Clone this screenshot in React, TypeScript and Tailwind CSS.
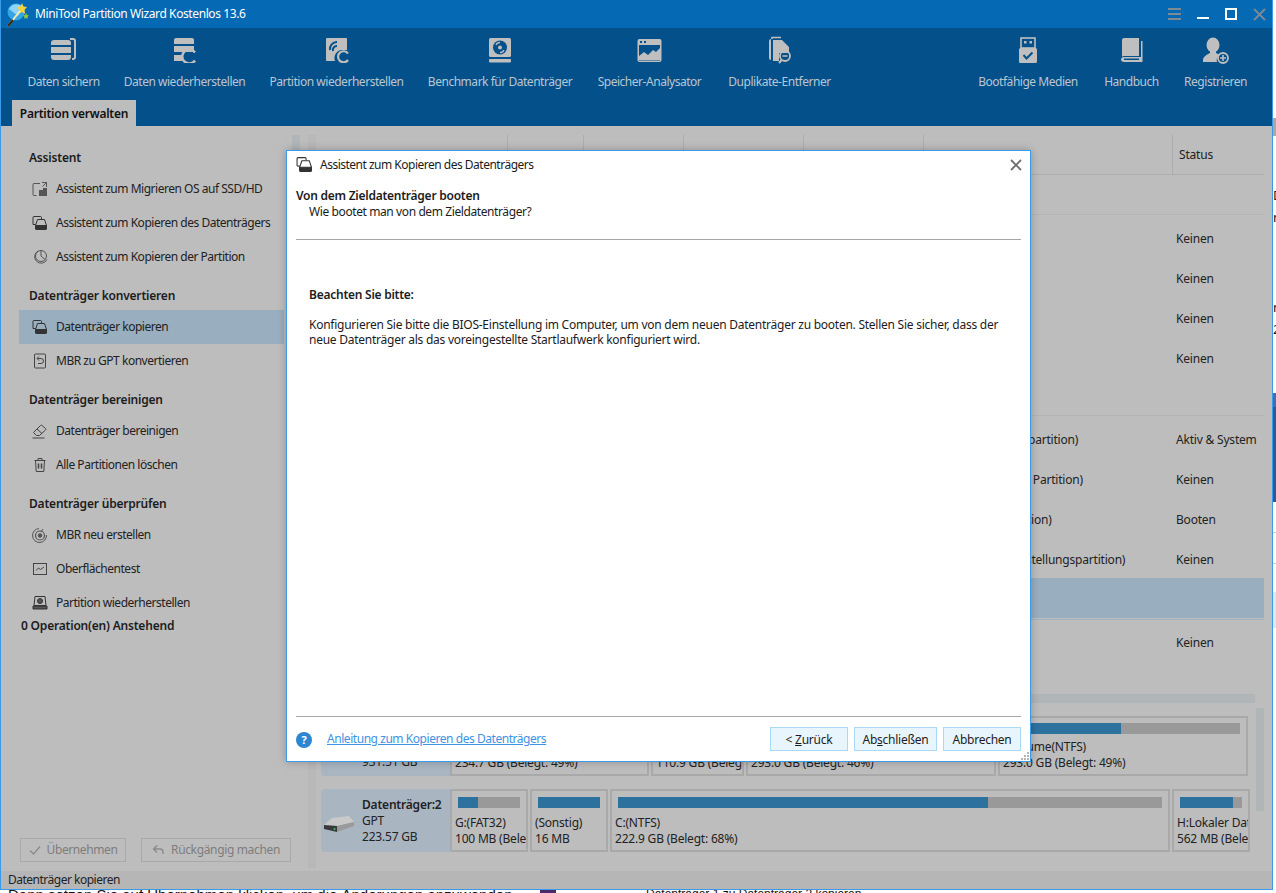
import { ReactNode } from "react"

const uiFont = "font-['Noto_Sans','Open_Sans','Liberation_Sans',sans-serif]"

function BackupIcon() {
  return (
    <svg width="26" height="26" viewBox="0 0 26 26" fill="#bfbfbf">
      <path d="M3 3h14a3 3 0 0 1 3 3v2H0V6a3 3 0 0 1 3-3z" />
      <rect x="0" y="10" width="20" height="6" />
      <path d="M0 18h20v2a3 3 0 0 1-3 3H3a3 3 0 0 1-3-3z" />
      <path d="M19 1h3a3 3 0 0 1 3 3v16a3 3 0 0 1-3 3h-1v-2h1a1 1 0 0 0 1-1V4a1 1 0 0 0-1-1h-3z" />
    </svg>
  )
}

function DataRestoreIcon() {
  return (
    <svg width="24" height="26" viewBox="0 0 24 26" fill="#bfbfbf">
      <path d="M3 1h16a2 2 0 0 1 2 2v4H1V3a2 2 0 0 1 2-2z" />
      <rect x="1" y="9" width="20" height="6" />
      <rect x="1" y="18" width="9" height="6" />
      <path d="M22 15.5a7 7 0 1 0 0 8" fill="none" stroke="#bfbfbf" strokeWidth="2.4" />
    </svg>
  )
}

function PartitionRestoreIcon() {
  return (
    <svg width="24" height="26" viewBox="0 0 24 26">
      <path d="M2 1h19a1 1 0 0 1 1 1v11h-5a8 8 0 0 0-7 11H2a1 1 0 0 1-1-1V2a1 1 0 0 1 1-1z" fill="#bfbfbf" />
      <path d="M5 13a7 7 0 0 1 7-8" fill="none" stroke="#04508a" strokeWidth="2" />
      <path d="M8 14a4 4 0 0 1 4-5" fill="none" stroke="#04508a" strokeWidth="2" />
      <path d="M23 16.5a5.5 5.5 0 1 0 0 6.5" fill="none" stroke="#bfbfbf" strokeWidth="2.2" />
    </svg>
  )
}

function BenchmarkIcon() {
  return (
    <svg width="24" height="26" viewBox="0 0 24 26">
      <rect x="1" y="1" width="22" height="19" rx="1.5" fill="#bfbfbf" />
      <circle cx="12" cy="10.5" r="7" fill="#04508a" />
      <circle cx="12" cy="10.5" r="2" fill="#bfbfbf" />
      <path d="M8 8a4 4 0 0 1 4-2.500M16 13a4 4 0 0 1-4 2.500" stroke="#bfbfbf" strokeWidth="1.3" fill="none" />
      <rect x="1" y="22" width="22" height="3.500" rx="1" fill="#bfbfbf" />
    </svg>
  )
}

function AnalyzerIcon() {
  return (
    <svg width="25" height="25" viewBox="0 0 25 25">
      <rect x="0.500" y="1" width="24" height="23" rx="2" fill="#bfbfbf" />
      <rect x="2" y="7" width="21" height="15.500" fill="#04508a" />
      <rect x="3" y="3" width="2" height="2" fill="#04508a" />
      <rect x="7" y="3" width="2" height="2" fill="#04508a" />
      <path d="M2 18l5-4 4 3 5-5 3 2 4-4v12H2z" fill="#bfbfbf" />
    </svg>
  )
}

function DuplicateIcon() {
  return (
    <svg width="24" height="28" viewBox="0 0 24 28">
      <path d="M4 3V1.500h9" fill="none" stroke="#bfbfbf" strokeWidth="1.500" />
      <path d="M1 5a2 2 0 0 1 2-2v21a2 2 0 0 1-2-2z" fill="#bfbfbf" />
      <path d="M5 4h9l7 7v6H11v8H5z" fill="#bfbfbf" />
      <circle cx="17" cy="20" r="5" fill="none" stroke="#bfbfbf" strokeWidth="1.800" />
      <path d="M14.500 20h5" stroke="#bfbfbf" strokeWidth="1.500" />
      <path d="M13.500 24l-2.500 3" stroke="#bfbfbf" strokeWidth="2" />
    </svg>
  )
}

function UsbIcon() {
  return (
    <svg width="18" height="26" viewBox="0 0 18 26">
      <rect x="2" y="1" width="14" height="10" fill="none" stroke="#bfbfbf" strokeWidth="1.600" />
      <rect x="5" y="4" width="2.500" height="2.500" fill="#bfbfbf" />
      <rect x="10.500" y="4" width="2.500" height="2.500" fill="#bfbfbf" />
      <rect x="0" y="11" width="18" height="15" rx="1.500" fill="#bfbfbf" />
      <path d="M4.500 18l3 3.500 6-6" fill="none" stroke="#04508a" strokeWidth="2" />
    </svg>
  )
}

function BookIcon() {
  return (
    <svg width="23" height="26" viewBox="0 0 23 26">
      <path d="M4 1h15v18H4a3 3 0 0 0-2 1V3a2 2 0 0 1 2-2z" fill="#bfbfbf" />
      <path d="M21 4h1.500v21H4a3 3 0 0 1-3-3 3 3 0 0 1 3-2h17z" fill="#bfbfbf" />
      <rect x="4" y="21.500" width="15" height="1.500" fill="#04508a" />
    </svg>
  )
}

function UserPlusIcon() {
  return (
    <svg width="27" height="27" viewBox="0 0 27 27">
      <ellipse cx="11" cy="8" rx="6.500" ry="7.500" fill="#bfbfbf" />
      <path d="M8 14h6v2l4 2a6 6 0 0 0-3 7H1v-2c0-3 3-5 7-7z" fill="#bfbfbf" />
      <circle cx="21" cy="21" r="5" fill="none" stroke="#bfbfbf" strokeWidth="1.800" />
      <path d="M18 21h6M21 18v6" stroke="#bfbfbf" strokeWidth="1.600" />
    </svg>
  )
}

function AppLogo() {
  return (
    <svg width="24" height="26" viewBox="0 0 24 26">
      <circle cx="10" cy="11" r="8.500" fill="#35a5e6" />
      <path d="M3 8a8.500 8.500 0 0 1 14-2l-5 9z" fill="#8fd3f7" />
      <path d="M16 2l1.500 3.500L21 6l-2.500 3 .5 4-3-2-3.500 1.500.8-3.500L11 6l3.500-.5z" fill="#f4d23c" />
      <path d="M20 12l1 2 2 .5-1.500 1.500.2 2-1.700-1-1.800 1 .3-2-1.500-1.500 2-.5z" fill="#8cc63f" />
      <path d="M14 10L2 25" stroke="#f7e9b0" strokeWidth="2" />
      <path d="M7 19L2 25" stroke="#3a2a10" strokeWidth="2" />
    </svg>
  )
}

function CopyDiskIcon({ size = 16 }: { size?: number }) {
  return (
    <svg width={size} height={size} viewBox="0 0 16 16" fill="none" stroke="#333" strokeWidth="1">
      <path d="M1 9.500V2.500a1 1 0 0 1 1-1h6.500a1 1 0 0 1 1 1V4" />
      <path d="M1 9.500h2.500" />
      <path d="M5.500 4.500h7l2 6v3a1 1 0 0 1-1 1h-9a1 1 0 0 1-1-1v-3z" fill="none" />
      <path d="M3.500 10.500h11v3a1 1 0 0 1-1 1h-9a1 1 0 0 1-1-1z" fill="#333" />
    </svg>
  )
}

function MigrateIcon() {
  return (
    <svg width="16" height="16" viewBox="0 0 16 16" fill="none" stroke="#555" strokeWidth="1">
      <path d="M8 2.500H2a1 1 0 0 0-1 1v10a1 1 0 0 0 1 1h2.500" />
      <path d="M10 1.500h4.500V6M14.500 1.500L10.500 5.500" />
      <rect x="7.500" y="9.500" width="3" height="5" fill="#555" />
      <rect x="11.500" y="7.500" width="3" height="7" fill="#555" />
    </svg>
  )
}

function PiePartIcon() {
  return (
    <svg width="16" height="16" viewBox="0 0 16 16" fill="none" stroke="#555" strokeWidth="1">
      <path d="M6 2a6.500 6.500 0 1 0 9 8.500" />
      <circle cx="9" cy="7" r="5.500" />
      <path d="M9 1.500V7l4 3.500" />
    </svg>
  )
}

function MbrGptIcon() {
  return (
    <svg width="16" height="16" viewBox="0 0 16 16" fill="none" stroke="#444" strokeWidth="1">
      <rect x="2.500" y="1" width="11" height="14" rx="1" />
      <path d="M5.500 5.500h3.500a2 2 0 0 1 0 5H6" />
      <path d="M7 3.500l-2 2 2 2" />
    </svg>
  )
}

function EraserIcon() {
  return (
    <svg width="16" height="16" viewBox="0 0 16 16" fill="none" stroke="#444" strokeWidth="1">
      <path d="M1.500 9.500l7-7a1 1 0 0 1 1.500 0l3.500 3a1 1 0 0 1 0 1.500l-6 5.500H4.500z" />
      <path d="M5 6l5 4.500" />
      <path d="M0.500 15h12" />
    </svg>
  )
}

function TrashIcon() {
  return (
    <svg width="16" height="16" viewBox="0 0 16 16" fill="none" stroke="#444" strokeWidth="1">
      <path d="M2.500 3.500h11M6 3.500V1.500h4v2" />
      <path d="M3.500 3.500l.7 11h7.600l.7-11" />
      <path d="M6.500 6.500v5M9.500 6.500v5" strokeWidth="1.500" />
    </svg>
  )
}

function RebuildIcon() {
  return (
    <svg width="16" height="16" viewBox="0 0 16 16" fill="none" stroke="#555" strokeWidth="1">
      <path d="M7 1.500A7 7 0 1 0 14.500 8" />
      <circle cx="8" cy="8.500" r="4.500" strokeWidth="1.200" />
      <circle cx="8" cy="8.500" r="1.800" fill="#555" />
      <path d="M9 5l2-3" />
    </svg>
  )
}

function SurfaceIcon() {
  return (
    <svg width="16" height="16" viewBox="0 0 16 16" fill="none" stroke="#444" strokeWidth="1">
      <rect x="1.500" y="2.500" width="13" height="11" />
      <path d="M4 9.500l2.500-2.500 2 1.500L12 6" />
    </svg>
  )
}

function RecoverIcon() {
  return (
    <svg width="16" height="16" viewBox="0 0 16 16" fill="none" stroke="#333" strokeWidth="1">
      <path d="M3 1.500h10l1 9H2z" />
      <circle cx="8" cy="6" r="2.500" fill="#555" />
      <path d="M1 11h14v3H1z" fill="#555" />
    </svg>
  )
}

function DriveIcon() {
  return (
    <svg width="32" height="18" viewBox="0 0 32 18">
      <path d="M1 10L9 3l17-2 5 6-17 4z" fill="#c9c9c9" />
      <path d="M14 11l17-4v4l-17 6z" fill="#9a9a9a" />
      <path d="M1 10l13 1v6L1 14z" fill="#3a3a3a" />
      <circle cx="11.500" cy="14" r="1" fill="#46c46a" />
    </svg>
  )
}

const tools: { label: string; width: string; icon: ReactNode }[] = [
  { label: "Daten sichern", width: "w-[97px]", icon: <BackupIcon /> },
  { label: "Daten wiederherstellen", width: "w-[145px]", icon: <DataRestoreIcon /> },
  { label: "Partition wiederherstellen", width: "w-[159px]", icon: <PartitionRestoreIcon /> },
  { label: "Benchmark für Datenträger", width: "w-[168px]", icon: <BenchmarkIcon /> },
  { label: "Speicher-Analysator", width: "w-[131px]", icon: <AnalyzerIcon /> },
  { label: "Duplikate-Entferner", width: "w-[129px]", icon: <DuplicateIcon /> },
]

const rightTools: { label: string; width: string; icon: ReactNode }[] = [
  { label: "Bootfähige Medien", width: "w-[126px]", icon: <UsbIcon /> },
  { label: "Handbuch", width: "w-[81px]", icon: <BookIcon /> },
  { label: "Registrieren", width: "w-[87px]", icon: <UserPlusIcon /> },
]

function ToolButton({ label, width, icon }: { label: string; width: string; icon: ReactNode }) {
  return (
    <div className={`${width} flex shrink-0 flex-col items-center`}>
      <div className="flex h-[28px] items-center">{icon}</div>
      <div className="mt-[10px] whitespace-nowrap text-[12px] leading-[16px] tracking-[-0.47px] text-[#b9c6d2]">{label}</div>
    </div>
  )
}

const sideGroups: { title: string; gap: string; items: { label: string; icon: ReactNode; active?: boolean }[] }[] = [
  {
    title: "Assistent",
    gap: "",
    items: [
      { label: "Assistent zum Migrieren OS auf SSD/HD", icon: <MigrateIcon /> },
      { label: "Assistent zum Kopieren des Datenträgers", icon: <CopyDiskIcon /> },
      { label: "Assistent zum Kopieren der Partition", icon: <PiePartIcon /> },
    ],
  },
  {
    title: "Datenträger konvertieren",
    gap: "mt-[8px]",
    items: [
      { label: "Datenträger kopieren", icon: <CopyDiskIcon />, active: true },
      { label: "MBR zu GPT konvertieren", icon: <MbrGptIcon /> },
    ],
  },
  {
    title: "Datenträger bereinigen",
    gap: "mt-[8px]",
    items: [
      { label: "Datenträger bereinigen", icon: <EraserIcon /> },
      { label: "Alle Partitionen löschen", icon: <TrashIcon /> },
    ],
  },
  {
    title: "Datenträger überprüfen",
    gap: "mt-[8px]",
    items: [
      { label: "MBR neu erstellen", icon: <RebuildIcon /> },
      { label: "Oberflächentest", icon: <SurfaceIcon /> },
      { label: "Partition wiederherstellen", icon: <RecoverIcon /> },
    ],
  },
]

function Sidebar() {
  return (
    <div className="flex w-[291px] shrink-0 flex-col pb-[9px] pt-[18px]">
      {sideGroups.map((group) => (
        <div key={group.title} className={group.gap}>
          <div className="flex h-[28px] items-center pl-[28px] text-[12px] font-semibold tracking-[-0.2px] text-[#1c1c1c]">
            {group.title}
          </div>
          {group.items.map((item) => (
            <div
              key={item.label}
              className={`ml-[18px] flex h-[34px] w-[265px] items-center gap-[8px] pl-[13px] text-[12px] tracking-[-0.48px] text-[#222] ${
                item.active ? "bg-[#99aebf]" : ""
              }`}
            >
              {item.icon}
              <span className="whitespace-nowrap">{item.label}</span>
            </div>
          ))}
        </div>
      ))}
      <div className="ml-[20px] text-[12px] font-semibold leading-[12px] tracking-[-0.2px] text-[#1c1c1c]">0 Operation(en) Anstehend</div>
      <div className="mt-auto flex gap-[15px] pl-[19px]">
        <div className="flex h-[24px] w-[106px] items-center justify-center gap-[6px] border border-[#a9a9a9] text-[12px] tracking-[-0.4px] text-[#7d7d7d]">
          <svg width="12" height="12" viewBox="0 0 12 12" fill="none" stroke="#8a8a8a" strokeWidth="1.200">
            <path d="M1 6.500l3.500 3.500L11 2.500" />
          </svg>
          Übernehmen
        </div>
        <div className="flex h-[24px] w-[150px] items-center justify-center gap-[7px] border border-[#a9a9a9] text-[12px] tracking-[-0.35px] text-[#7d7d7d]">
          <svg width="12" height="12" viewBox="0 0 12 12" fill="none" stroke="#8a8a8a" strokeWidth="1.400">
            <path d="M5 1.500L1.500 5 5 8.500M1.500 5H8a3 3 0 0 1 3 3v2" />
          </svg>
          Rückgängig machen
        </div>
      </div>
    </div>
  )
}

const upperRows = ["Keinen", "Keinen", "Keinen", "Keinen"]
const lowerRows = [
  { type: "GPT (EFI-Systempartition)", status: "Aktiv & System" },
  { type: "GPT (Reservierte Partition)", status: "Keinen" },
  { type: "GPT (Datenpartition)", status: "Booten" },
  { type: "GPT (Wiederherstellungspartition)", status: "Keinen" },
]

function Row({ type, status }: { type: string; status: string }) {
  return (
    <div className="flex h-[40px] items-center pl-[624px] pt-[4px] text-[12px] tracking-[-0.2px] text-[#222]">
      <div className="w-[236px] whitespace-nowrap">{type}</div>
      <div className="whitespace-nowrap">{status}</div>
    </div>
  )
}

function PartitionTable() {
  const cols = ["w-[192px]", "w-[76px]", "w-[100px]", "w-[120px]", "w-[120px]", "w-[249px]"]
  return (
    <div className="flex flex-col">
      <div className="flex h-[40px] border-b border-[#adadad]">
        {cols.map((col) => (
          <div key={col} className={`${col} shrink-0 border-r border-[#adadad]`} />
        ))}
        <div className="flex items-center pl-[6px] text-[12px] tracking-[-0.2px] text-[#222]">Status</div>
      </div>
      <div className="h-[40px] border-b border-[#b4b4b4]" />
      <div className="pt-[2px]">
        {upperRows.map((status, i) => (
          <Row key={i} type="" status={status} />
        ))}
      </div>
      <div className="h-[39px] border-b border-[#b4b4b4]" />
      <div className="pt-[2px]">
        {lowerRows.map((row) => (
          <Row key={row.type} type={row.type} status={row.status} />
        ))}
      </div>
      <div className="h-[40px] bg-[#99aebf]" />
      <div className="mt-[1px] h-[1px] bg-[#9fb3c4]" />
      <div className="mt-[1px]">
        <Row type="" status="Keinen" />
      </div>
    </div>
  )
}

type Part = { w: string; bar: string; used: number; line1: string; line2: string }

const diskOne: Part[] = [
  { w: "w-[199px]", bar: "w-[183px]", used: 49, line1: "D:(NTFS)", line2: "234.7 GB (Belegt: 49%)" },
  { w: "w-[93px]", bar: "w-[77px]", used: 40, line1: "E:(NTFS)", line2: "110.9 GB (Belegt: 40%)" },
  { w: "w-[250px]", bar: "w-[234px]", used: 46, line1: "F:(NTFS)", line2: "293.0 GB (Belegt: 46%)" },
  { w: "w-[250px]", bar: "w-[234px]", used: 49, line1: "I:Volume(NTFS)", line2: "293.0 GB (Belegt: 49%)" },
]

const diskTwo: Part[] = [
  { w: "w-[78px]", bar: "w-[62px]", used: 32, line1: "G:(FAT32)", line2: "100 MB (Belegt: 32%)" },
  { w: "w-[78px]", bar: "w-[62px]", used: 100, line1: "(Sonstig)", line2: "16 MB" },
  { w: "w-[560px]", bar: "w-[544px]", used: 68, line1: "C:(NTFS)", line2: "222.9 GB (Belegt: 68%)" },
  { w: "w-[78px]", bar: "w-[62px]", used: 85, line1: "H:Lokaler Datenträger", line2: "562 MB (Belegt: 85%)" },
]

function PartBox({ part, barGap, textGap }: { part: Part; barGap: string; textGap: string }) {
  return (
    <div className={`${part.w} shrink-0 overflow-hidden border-2 border-[#a9a9a9] text-[12px] leading-[16px] tracking-[-0.2px] text-[#222]`}>
      <div className={`${part.bar} ${barGap} mx-[6px] flex h-[11px] bg-[#999999]`}>
        <div className="h-full bg-[#2d719f]" style={{ width: `${part.used}%` }} />
      </div>
      <div className={`${textGap} whitespace-nowrap pl-[3px]`}>{part.line1}</div>
      <div className="whitespace-nowrap pl-[3px]">{part.line2}</div>
    </div>
  )
}

function DiskRow({ name, size, parts, height, barGap, textGap }: { name: string; size: string; parts: Part[]; height: string; barGap: string; textGap: string }) {
  return (
    <div className={`flex ${height}`}>
      <div className="flex w-[129px] shrink-0 items-center rounded-l-[4px] bg-[#a9b6c2] pl-[2px] text-[12px] leading-[16px] tracking-[-0.2px] text-[#222]">
        <div className="mt-[6px] w-[39px]">
          <DriveIcon />
        </div>
        <div>
          <div className="font-semibold">{name}</div>
          <div>GPT</div>
          <div>{size}</div>
        </div>
      </div>
      <div className="flex gap-[2px]">
        {parts.map((part) => (
          <PartBox key={part.line2} part={part} barGap={barGap} textGap={textGap} />
        ))}
      </div>
    </div>
  )
}

function DiskMap() {
  return (
    <div className="mt-[33px]">
      <div className="ml-[4px] h-[9px] w-[935px] bg-[#b0b5b8]" />
      <div className="flex">
        <div className="flex w-[940px] shrink-0 flex-col gap-[13px] pl-[5px] pt-[13px]">
          <DiskRow name="Datenträger:1" size="931.51 GB" parts={diskOne} height="h-[60px]" barGap="mt-[5px]" textGap="mt-[5px]" />
          <DiskRow name="Datenträger:2" size="223.57 GB" parts={diskTwo} height="h-[63px]" barGap="mt-[6px]" textGap="mt-[7px]" />
        </div>
        <div className="mt-[5px] h-[103px] w-[8px] bg-[#b0b5b8]" />
      </div>
    </div>
  )
}

function WizardDialog() {
  return (
    <div className="absolute left-[286px] top-[150px] flex h-[612px] w-[745px] flex-col border-[1.5px] border-[#3c9be8] bg-white text-[12px] tracking-[-0.25px] text-[#1c1c1c] shadow-[0_0_8px_rgba(0,0,0,0.25)]">
      <div className="flex h-[27px] items-center pl-[9px]">
        <CopyDiskIcon size={17} />
        <span className="ml-[7px] tracking-[-0.5px]">Assistent zum Kopieren des Datenträgers</span>
        <svg className="ml-auto mr-[8px]" width="12" height="12" viewBox="0 0 12 12" stroke="#6f6f6f" strokeWidth="1.800">
          <path d="M1 1l10 10M11 1L1 11" />
        </svg>
      </div>
      <div className="ml-[9px] mr-[9px] mt-[10px] h-[52px] border-b border-[#a6a6a6] leading-[16px]">
        <div className="font-semibold">Von dem Zieldatenträger booten</div>
        <div className="pl-[13px] tracking-[-0.4px]">Wie bootet man von dem Zieldatenträger?</div>
      </div>
      <div className="px-[22px] pt-[47px] leading-[15px]">
        <div className="font-semibold">Beachten Sie bitte:</div>
        <div className="mt-[15px] w-[705px]">
          Konfigurieren Sie bitte die BIOS-Einstellung im Computer, um von dem neuen Datenträger zu booten. Stellen Sie sicher, dass der neue Datenträger als das voreingestellte Startlaufwerk konfiguriert wird.
        </div>
      </div>
      <div className="ml-[9px] mr-[9px] mt-auto flex h-[45px] items-center border-t border-[#a6a6a6] pb-[4px]">
        <div className="mt-[6px] flex h-[16px] w-[16px] items-center justify-center rounded-full bg-[#2f86d0] text-[11px] font-bold text-white">?</div>
        <span className="ml-[15px] mt-[4px] tracking-[-0.45px] text-[#3f93e3] underline">Anleitung zum Kopieren des Datenträgers</span>
        <div className="ml-auto mt-[4px] flex gap-[6px]">
          <div className="flex h-[24px] w-[78px] items-center justify-center border border-[#a9d9f5] bg-[#e9f5fd] pt-[1px]">
            <span>
              {"< "}
              <span className="underline">Z</span>urück
            </span>
          </div>
          <div className="flex h-[24px] w-[83px] items-center justify-center border border-[#a9d9f5] bg-[#e9f5fd] pt-[1px]">
            <span>
              Ab<span className="underline">s</span>chließen
            </span>
          </div>
          <div className="flex h-[24px] w-[78px] items-center justify-center border border-[#a9d9f5] bg-[#e9f5fd] pt-[1px]">Abbrechen</div>
        </div>
      </div>
      <svg className="absolute bottom-[1px] right-[1px]" width="8" height="8" viewBox="0 0 8 8" fill="#b5b5b5">
        <rect x="6" y="0" width="2" height="2" />
        <rect x="3" y="3" width="2" height="2" />
        <rect x="6" y="3" width="2" height="2" />
        <rect x="0" y="6" width="2" height="2" />
        <rect x="3" y="6" width="2" height="2" />
        <rect x="6" y="6" width="2" height="2" />
      </svg>
    </div>
  )
}

export default function App() {
  return (
    <div className={`relative flex h-[893px] w-[1276px] flex-col overflow-hidden bg-white ${uiFont}`}>
      <div className="flex h-[890px] shrink-0">
        <div className="flex w-[1273px] shrink-0 flex-col border-b border-l border-r border-[#3c9be8]">
          <div className="flex h-[28px] shrink-0 items-center bg-[#0569b4] pl-[5px] pr-[6px] text-[12px] tracking-[-0.4px] text-white">
            <AppLogo />
            <span className="ml-[5px]">MiniTool Partition Wizard Kostenlos 13.6</span>
            <div className="ml-auto flex items-center gap-[16px]">
              <svg width="13" height="12" viewBox="0 0 13 12" fill="#7d8a94">
                <rect y="0" width="13" height="2" />
                <rect y="5" width="13" height="2" />
                <rect y="10" width="13" height="2" />
              </svg>
              <div className="mt-[7px] h-[2px] w-[12px] bg-white" />
              <div className="h-[12px] w-[12px] border-2 border-white" />
              <svg width="13" height="13" viewBox="0 0 13 13" stroke="#7d8a94" strokeWidth="1.800">
                <path d="M1 1l11 11M12 1L1 12" />
              </svg>
            </div>
          </div>
          <div className="flex h-[98px] shrink-0 flex-col bg-[#04508a]">
            <div className="flex h-[72px] items-start pl-[14px] pr-[13px] pt-[8px]">
              {tools.map((tool) => (
                <ToolButton key={tool.label} {...tool} />
              ))}
              <div className="ml-auto flex">
                {rightTools.map((tool) => (
                  <ToolButton key={tool.label} {...tool} />
                ))}
              </div>
            </div>
            <div className="ml-[11px] flex h-[26px] w-[124px] items-center justify-center bg-[#bdbdbd] pt-[1px] text-[12px] font-semibold tracking-[-0.25px] text-[#111]">
              Partition verwalten
            </div>
          </div>
          <div className="flex min-h-0 flex-1 bg-[#bdbdbd]">
            <Sidebar />
            <div className="mt-[9px] h-[180px] w-[8px] shrink-0 bg-[#b0b5b8]" />
            <div className="ml-[8px] mb-[3px] mt-[9px] w-[8px] shrink-0 bg-[#b8b8b8]" />
            <div className="mt-[9px] w-[948px] shrink-0">
              <PartitionTable />
              <DiskMap />
            </div>
          </div>
          <div className="flex h-[18px] shrink-0 items-center bg-[#b6b6b6] pl-[7px] text-[12px] tracking-[-0.5px] text-[#222]">Datenträger kopieren</div>
        </div>
        <div className="flex flex-1 flex-col overflow-hidden text-[13px] leading-[22px] text-[#111]">
          <div className="mt-[118px] h-[18px] w-full shrink-0 bg-[#a8a8a8]" />
          <div className="mt-[48px] shrink-0">D</div>
          <div className="shrink-0">n</div>
          <div className="mt-[68px] shrink-0">n</div>
          <div className="shrink-0">2</div>
          <div className="mt-[53px] h-[14px] w-full shrink-0 bg-[#3d6fb8]" />
          <div className="h-[95px] w-full shrink-0 bg-[#2a5aa0]" />
          <div className="mt-[30px] h-[1px] w-full shrink-0 bg-[#cfcfcf]" />
          <div className="mt-[30px] h-[1px] w-full shrink-0 bg-[#cfcfcf]" />
          <div className="mt-[28px] h-[36px] w-full shrink-0 bg-[#d6eafa]" />
        </div>
      </div>
      <div className="flex h-[3px] overflow-hidden whitespace-nowrap text-[15px] leading-[15px] text-[#111]">
        <div className="-mt-[3px] w-[540px] shrink-0 pl-[8px] font-['Liberation_Sans',sans-serif]">Dann setzen Sie auf Übernehmen klicken, um die Änderungen anzuwenden.</div>
        <div className="h-[3px] w-[16px] shrink-0 bg-[#4a2a6a]" />
        <div className="-mt-[3px] pl-[90px] font-['Liberation_Sans',sans-serif] text-[12px]">Datenträger 1 zu Datenträger 2 kopieren</div>
      </div>
      <WizardDialog />
    </div>
  )
}
